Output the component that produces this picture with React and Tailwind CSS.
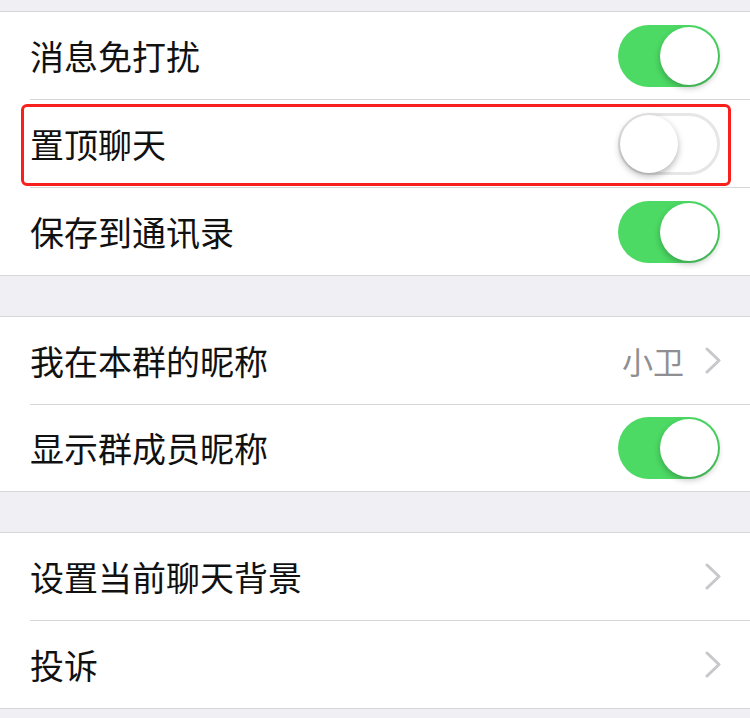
const FONT = { fontFamily: '"Noto Sans CJK SC", "Noto Sans", sans-serif' };

function Toggle({ on }) {
  return on ? (
    <div className="relative w-[102px] h-[62px] rounded-full bg-[#4cd964]">
      <div className="absolute right-[2px] top-[2px] w-[58px] h-[58px] rounded-full bg-white shadow-[0_3px_6px_rgba(0,0,0,0.25)]" />
    </div>
  ) : (
    <div className="relative w-[102px] h-[62px] rounded-full bg-white border-[3px] border-[#e6e6e6]">
      <div className="absolute left-[-1px] top-[-1px] w-[58px] h-[58px] rounded-full bg-white shadow-[0_3px_7px_rgba(0,0,0,0.3)]" />
    </div>
  );
}

function Chevron() {
  return (
    <svg width="18" height="27" viewBox="0 0 18 27" className="mr-[-2px]">
      <polyline points="3,2 15,13.5 3,25" fill="none" stroke="#c7c7cc" strokeWidth="3" strokeLinecap="round" strokeLinejoin="round" />
    </svg>
  );
}

function Row({ label, right, highlight, h = 'h-[87px]' }) {
  return (
    <div className={`relative ${h} flex items-center justify-between pl-[30px] pr-[30px]`}>
      <span className="text-[34px] text-[#111] leading-none">{label}</span>
      {right}
      {highlight && (
        <div className="absolute left-[21px] right-[19px] top-[4px] bottom-[1px] border-[3px] border-[#f8201c] rounded-[6px]" />
      )}
    </div>
  );
}

function Section({ children }) {
  return (
    <div className="bg-white border-y border-[#d6d6da]">
      {children.map((c, i) => (
        <div key={i}>
          {i > 0 && <div className="ml-[30px] h-px bg-[#d6d6da]" />}
          {c}
        </div>
      ))}
    </div>
  );
}

export default function App() {
  return (
    <div className="w-[750px] h-[718px] bg-[#efeff4] overflow-hidden" style={FONT}>
      <div className="h-[11px]" />
      <Section>
        {[
          <Row label="消息免打扰" right={<Toggle on />} />,
          <Row label="置顶聊天" right={<Toggle on={false} />} highlight />,
          <Row label="保存到通讯录" right={<Toggle on />} />,
        ]}
      </Section>
      <div className="h-[40px]" />
      <Section>
        {[
          <Row
            label="我在本群的昵称"
            right={
              <div className="flex items-center gap-[20px]">
                <span className="text-[31px] text-[#8e8e93] leading-none">小卫</span>
                <Chevron />
              </div>
            }
          />,
          <Row label="显示群成员昵称" right={<Toggle on />} h="h-[86px]" />,
        ]}
      </Section>
      <div className="h-[40px]" />
      <Section>
        {[
          <Row label="设置当前聊天背景" right={<Chevron />} />,
          <Row label="投诉" right={<Chevron />} />,
        ]}
      </Section>
    </div>
  );
}
